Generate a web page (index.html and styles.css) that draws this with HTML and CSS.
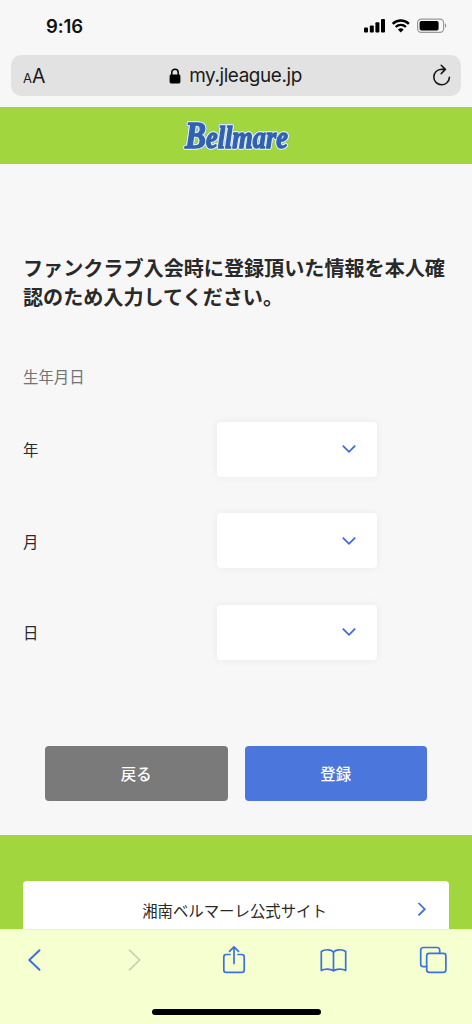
FILE: index.html
```html
<!DOCTYPE html>
<html lang="ja">
<head>
<meta charset="utf-8">
<title>my.jleague.jp</title>
<link rel="stylesheet" href="styles.css">
</head>
<body>
<div class="phone">
  <div class="status">
    <span class="time">9:16</span>
    <svg class="status-icons" width="86" height="18" viewBox="0 0 86 18">
      <rect x="1" y="10.5" width="4" height="5" rx="1"/>
      <rect x="6.8" y="8.4" width="4" height="7.1" rx="1"/>
      <rect x="12.4" y="5.2" width="4" height="10.3" rx="1"/>
      <rect x="18" y="2" width="4" height="13.5" rx="1"/>
      <g class="wifi">
        <path d="M29.7 6.8a11.5 11.5 0 0 1 16.2 0"/>
        <path d="M32.7 10a7.2 7.2 0 0 1 10.2 0"/>
      </g>
      <path d="M37.8 15.6l-2.9-3a4.2 4.2 0 0 1 5.8 0z"/>
      <rect class="shell" x="54.6" y="2.1" width="26" height="13.2" rx="3.6"/>
      <rect x="56.6" y="4" width="19" height="9.5" rx="1.8"/>
      <path class="nub" d="M82 6.6c1.7.4 1.7 3.8 0 4.2z"/>
    </svg>
  </div>
  <div class="address">
    <span class="reader"><small>A</small>A</span>
    <span class="host">
      <svg width="12" height="16" viewBox="0 0 12 16"><rect x=".6" y="6.5" width="10.8" height="9" rx="1.4"/><path class="shackle" d="M2.8 7V4.4a3.2 3.2 0 0 1 6.4 0V7"/></svg>
      <span>my.jleague.jp</span>
    </span>
    <svg class="reload" width="20" height="24" viewBox="0 0 20 24"><path d="M17.4 13.4A7.8 7.8 0 1 1 9.5 5.2l3.3.2M9.2 1.3l4.2 4.1-4.2 4.2"/></svg>
  </div>
  <header class="brand">
    <svg width="116" height="50" viewBox="0 0 116 50" role="img" aria-label="Bellmare">
      <text x="7" y="37" textLength="103" lengthAdjust="spacingAndGlyphs"><tspan class="cap">B</tspan><tspan class="rest">ellmare</tspan></text>
    </svg>
  </header>
  <main class="form">
    <h1>ファンクラブ入会時に登録頂いた情報を本人確認のため入力してください。</h1>
    <p class="legend">生年月日</p>
    <div class="fields">
      <div class="field"><span>年</span><div class="select"><svg width="16" height="10" viewBox="0 0 16 10"><path d="M1.8 1.6L8 7.8l6.2-6.2"/></svg></div></div>
      <div class="field"><span>月</span><div class="select"><svg width="16" height="10" viewBox="0 0 16 10"><path d="M1.8 1.6L8 7.8l6.2-6.2"/></svg></div></div>
      <div class="field"><span>日</span><div class="select"><svg width="16" height="10" viewBox="0 0 16 10"><path d="M1.8 1.6L8 7.8l6.2-6.2"/></svg></div></div>
    </div>
    <div class="actions"><button class="back">戻る</button><button class="submit">登録</button></div>
  </main>
  <footer class="links">
    <div class="link"><span>湘南ベルマーレ公式サイト</span><svg width="10" height="16" viewBox="0 0 10 16"><path d="M1.5 1L7.8 7.200l-6.300 6.200"/></svg></div>
  </footer>
  <nav class="toolbar">
    <div class="tools">
      <svg viewBox="0 0 32 32"><path class="thick" d="M21.500 6.200L11.300 16l10.200 9.800"/></svg>
      <svg class="off" viewBox="0 0 32 32"><path d="M11.5 6.2L21.7 16l-10.2 9.8"/></svg>
      <svg viewBox="0 0 32 32"><path d="M12 10.500H8.200a2.400 2.400 0 0 0-2.400 2.400v13a2.400 2.400 0 0 0 2.400 2.400h15.600a2.400 2.400 0 0 0 2.400-2.400v-13a2.400 2.400 0 0 0-2.400-2.400H20M16 19.500V3M11.500 7.300l4.500-4.500 4.500 4.500"/></svg>
      <svg viewBox="0 0 32 32"><path d="M16.500 8.200C14.500 5.200 7.500 5 4.300 7.500v19c3-1.900 9.300-1.900 12.200.3 2.900-2.200 9.200-2.200 12.200-.3v-19C25.500 5 18.500 5.200 16.500 8.200zM16.500 8.200v18.500"/></svg>
      <svg viewBox="0 0 32 32"><path d="M9.500 22.600H6.200A2.500 2.500 0 0 1 3.700 20.100V6A2.500 2.500 0 0 1 6.200 3.500h14A2.500 2.500 0 0 1 22.700 6v3"/><rect x="9.700" y="9.300" width="19.200" height="19" rx="2.500"/></svg>
    </div>
    <div class="home"></div>
  </nav>
</div>
</body>
</html>
```
FILE: styles.css
```css
* { box-sizing: border-box; }
body { margin: 0; background: #f7f7f7; color: #292929; font-family: "Noto Sans CJK JP", sans-serif; }
svg { display: block; flex: none; }
.phone { width: 472px; height: 1024px; display: flex; flex-direction: column; overflow: hidden; }
.status { height: 55px; padding: 0 23px 3px 46px; display: flex; align-items: center; justify-content: space-between; color: #111; font: 600 18.500px/1 Inter, sans-serif; }
.time { letter-spacing: -.1px; }
.status-icons { fill: #000; }
.status-icons .wifi { fill: none; stroke: #000; stroke-width: 2.400; }
.status-icons .shell { fill: none; stroke: #999; stroke-width: 1.200; }
.status-icons .nub { fill: #999; }
.address { height: 41px; margin: 0 11px; padding: 0 9px 0 12px; border-radius: 10px; background: #e2e2e3; display: grid; grid-template-columns: 1fr auto 1fr; align-items: center; color: #1a1a1a; font: 400 18.900px/1 Inter, sans-serif; }
.reader { font-size: 19.500px; padding-top: 2px; }
.reader small { font-size: 13px; }
.host { display: flex; align-items: center; gap: 8px; letter-spacing: -.4px; padding-right: 4px; }
.host span { padding-top: 2px; }
.host svg { fill: #000; }
.host .shackle { fill: none; stroke: #000; stroke-width: 1.500; }
.reload { justify-self: end; fill: none; stroke: #1a1a1a; stroke-width: 1.600; stroke-linecap: round; stroke-linejoin: round; }
.brand { height: 57px; margin-top: 11px; background: #a2d63f; display: flex; align-items: center; justify-content: center; flex: none; }
.brand svg { overflow: visible; filter: drop-shadow(1px 0 0 #dceaf4) drop-shadow(-1px 0 0 #dceaf4) drop-shadow(0 1px 0 #dceaf4) drop-shadow(0 -1px 0 #dceaf4) drop-shadow(0 0 .6px #2f62b0); }
.brand text { font-family: "Liberation Serif", serif; font-style: italic; font-weight: 700; fill: #2f62b0; stroke: #2f62b0; stroke-width: 1.300px; stroke-linejoin: round; }
.brand .cap { font-size: 37px; }
.brand .rest { font-size: 31px; }
.form { height: 671px; padding: 90px 22.500px 0 23px; flex: none; }
h1 { margin: 0; font-size: 20.100px; line-height: 28.500px; font-weight: 700; width: 426px; }
.legend { margin: 53px 0 0; font-size: 15.400px; line-height: 24px; color: #737373; }
.fields { margin-top: 33.500px; display: grid; gap: 36.500px; }
.field { height: 55px; display: grid; grid-template-columns: 194px 160px; align-items: center; font-size: 15.400px; }
.select { height: 55px; border-radius: 4px; background: #fff; box-shadow: 0 0 9px rgba(0,0,0,.06); padding-right: 20px; display: flex; align-items: center; justify-content: flex-end; }
.select svg, .link svg { fill: none; stroke: #3c69d8; stroke-width: 1.700; }
.actions { margin: 86.500px 22.500px 0 22px; display: flex; gap: 17px; }
.actions button { height: 55px; flex: 1; border: 0; border-radius: 4px; padding: 0; color: #fff; font: 500 15.400px/1 "Noto Sans CJK JP", sans-serif; }
.back { background: #7a7a7a; }
.submit { background: #4b76db; }
.links { height: 94px; flex: none; background: #a2d63f; padding: 46px 23px 0; overflow: hidden; }
.link { height: 57px; border-radius: 4px 4px 0 0; background: #fff; display: grid; grid-template-columns: 29px 1fr 10px; align-items: center; text-align: center; font-size: 15.400px; padding-right: 22px; }
.link::before { content: ""; }
.toolbar { height: 95px; flex: none; background: #f6ffd0; border-top: 1px solid #eaf1cb; padding: 14px 23px 0 18px; }
.tools { display: flex; justify-content: space-between; }
.tools svg { width: 32px; height: 32px; fill: none; stroke: #3a72df; stroke-width: 1.700; stroke-linejoin: round; stroke-linecap: round; }
.tools .thick { stroke-width: 2; }
.tools .off { stroke: #c8cfac; }
.home { width: 169px; height: 6px; border-radius: 3px; background: #000; margin: 33px auto 0 134px; }
```
